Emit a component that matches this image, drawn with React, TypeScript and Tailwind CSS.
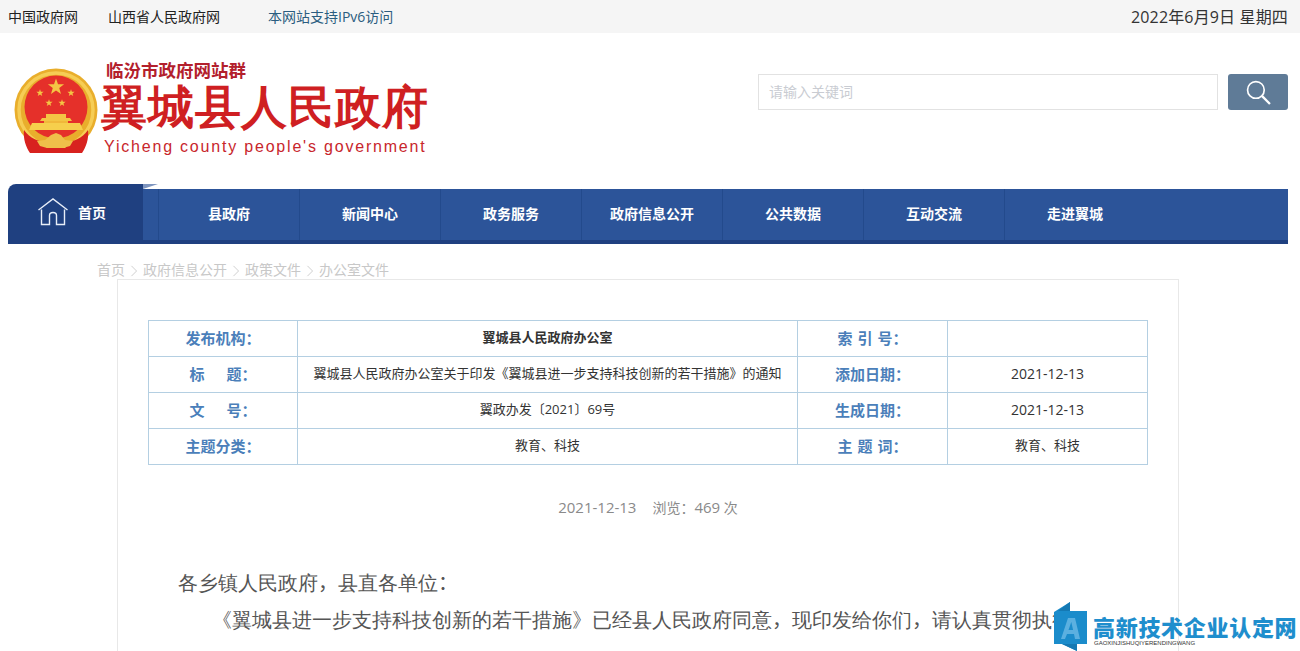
import React from "react";

const navItems = ["县政府", "新闻中心", "政务服务", "政府信息公开", "公共数据", "互动交流", "走进翼城"];

const Star = ({ x, y, r }: { x: number; y: number; r: number }) => {
  const pts = Array.from({ length: 10 }, (_, i) => {
    const a = -Math.PI / 2 + (i * Math.PI) / 5;
    const d = i % 2 === 0 ? r : r * 0.4;
    return `${(x + d * Math.cos(a)).toFixed(2)},${(y + d * Math.sin(a)).toFixed(2)}`;
  });
  return <polygon points={pts.join(" ")} fill="#f4c544" />;
};

const Emblem = () => (
  <svg viewBox="14 67 88 90" className="h-[90px] w-[88px] shrink-0">
    <circle cx="57" cy="110" r="41.5" fill="#e9ae2c" />
    <circle cx="57" cy="110" r="37" fill="none" stroke="#f6cd55" strokeWidth="3.5" />
    <circle cx="57" cy="107" r="31.5" fill="#e5302a" />
    <Star x={57} y={87} r={8.5} />
    <Star x={41} y={93} r={3.8} />
    <Star x={50} y={103} r={3.8} />
    <Star x={63} y={103} r={3.8} />
    <Star x={72} y={93} r={3.8} />
    <path d="M43 118h28l2 3H41z M47 114h20v4H47z" fill="#f4c544" />
    <path d="M45 121h24v2H45z" fill="#f0b93a" />
    <path d="M33 123h48l3 7H30z" fill="#f6cf4c" />
    <path d="M25 130c6 9 15 11 20 12l5 11H31c-4-6-7-14-6-23z" fill="#d8221f" />
    <path d="M89 130c-6 9-15 11-20 12l-5 11h19c4-6 7-14 6-23z" fill="#d8221f" />
    <path d="M52 135l5-2 5 2 4 5 8 1-3 5-7 2-2 5H50l-2-5-7-2-3-5 8-1z" fill="#efc04a" />
    <path d="M47 148h20l-2 5H49z" fill="#d8221f" />
  </svg>
);

const HomeIcon = () => (
  <svg viewBox="0 0 30 28" fill="none" stroke="#e8eef8" strokeWidth="1.4" className="h-[28px] w-[30px]">
    <path d="M0.5 12 15 1l14.5 11" />
    <path d="M3.5 11.5V26.5H11.5V17.5c0-4 7-4 7 0V26.5H26.5V11.5" />
  </svg>
);

const Label = ({ children }: { children: React.ReactNode }) => (
  <td className="border border-[#b4cfe2] pb-[1px] text-center text-[15px] font-bold text-[#4b7fba] [word-spacing:1px]">
    {children}
  </td>
);

const Value = ({ children, bold, date }: { children?: React.ReactNode; bold?: boolean; date?: boolean }) => (
  <td className={`border border-[#b4cfe2] text-center text-[#333] ${date ? "pb-[2px] text-[14px]" : "pb-[1px] text-[13px]"} ${bold ? "font-bold" : ""}`}>
    {children}
  </td>
);

const Crumb = () => (
  <svg viewBox="0 0 8 14" fill="none" stroke="#c8c8c8" className="mx-[5px] mb-[2px] h-[12px] w-[8px]">
    <path d="M1 1l6 6-6 6" />
  </svg>
);

const Punct = ({ children }: { children: React.ReactNode }) => (
  <span className="font-['Noto_Sans_CJK_SC',sans-serif]">{children}</span>
);

export default function App() {
  return (
    <div className="relative h-[651px] overflow-hidden bg-white font-['Open_Sans','Noto_Sans_CJK_SC',sans-serif]">
      <div className="flex h-[33px] items-center bg-[#f5f5f5] px-2 text-[14px] text-[#222]">
        <a>中国政府网</a>
        <a className="ml-[30px]">山西省人民政府网</a>
        <a className="ml-[48px] text-[#2b5d80]">本网站支持IPv6访问</a>
        <span className="ml-auto pr-[4px] text-[16px] tracking-[0.15px] text-[#333]">2022年6月9日 星期四</span>
      </div>

      <header className="flex h-[151px] items-start justify-between pl-[13px] pr-3">
        <div className="mt-[34px] flex">
          <Emblem />
          <div className="flex flex-col">
            <div className="ml-[5px] mt-[-9px] h-[25px] text-[17.5px] font-bold leading-[25px] text-[#b3202c]">临汾市政府网站群</div>
            <div className="mt-[-1px] h-[54px] font-serif text-[46px] font-black leading-[54px] tracking-[0.8px] text-[#cf1f22]">翼城县人民政府</div>
            <div className="ml-[3px] mt-[1px] font-['Liberation_Sans',sans-serif] text-[16px] leading-[20px] tracking-[1.8px] text-[#c8262c]">
              Yicheng county people's government
            </div>
          </div>
        </div>
        <div className="mt-[41px] flex gap-[10px]">
          <div className="flex h-[36px] w-[460px] items-center border border-[#e2e2e2] pb-[2px] pl-[10px] text-[14px] text-[#c9ccd2]">请输入关键词</div>
          <button className="flex h-[36px] w-[60px] items-center justify-center rounded-[3px] bg-[#5f7b97]">
            <svg viewBox="0 0 24 24" fill="none" stroke="#fff" strokeWidth="1.6" className="h-[25px] w-[25px]">
              <circle cx="9.5" cy="9.5" r="8" />
              <path d="M15.5 15.5 23 23" strokeWidth="2.2" />
            </svg>
          </button>
        </div>
      </header>

      <nav className="relative ml-2 flex h-[60px] w-[1280px] items-end">
        <div className="flex h-[60px] w-[135px] items-center gap-[10px] rounded-tl-[8px] bg-[#1f4080] pb-[4px] pl-[30px] text-[14px] font-bold text-white">
          <HomeIcon />
          <span>首页</span>
        </div>
        <div className="absolute left-[135px] top-0 h-0 w-0 border-b-[5px] border-l-[15px] border-b-transparent border-l-[#7e95bf]" />
        <div className="flex h-[55px] flex-1 border-b-4 border-[#1f4080] bg-[#2c5499]">
          <div className="w-[15px]" />
          {navItems.map((item) => (
            <a key={item} className="flex w-[141px] items-center justify-center border-l border-[#234a8c] pb-[2px] text-[14px] font-bold text-white">
              {item}
            </a>
          ))}
        </div>
      </nav>

      <div className="ml-[97px] flex h-[35px] items-end text-[14px] leading-[19px] text-[#c8c8c8]">
        <span>首页</span><Crumb /><span>政府信息公开</span><Crumb /><span>政策文件</span><Crumb /><span>办公室文件</span>
      </div>

      <main className="ml-[117px] h-[400px] w-[1062px] border-x border-t border-[#e8e8e8] px-[30px] pt-[40px]">
        <table className="h-[145px] w-[999px] table-fixed border-collapse">
          <colgroup>
            <col className="w-[149px]" />
            <col className="w-[500px]" />
            <col className="w-[150px]" />
            <col className="w-[200px]" />
          </colgroup>
          <tbody>
            <tr className="h-[36px]">
              <Label>发布机构{"\uFF1A"}</Label>
              <Value bold>翼城县人民政府办公室</Value>
              <Label>索 引 号{"\uFF1A"}</Label>
              <Value />
            </tr>
            <tr className="h-[36px]">
              <Label>标<span className="ml-[22px]">题{"\uFF1A"}</span></Label>
              <Value>翼城县人民政府办公室关于印发《翼城县进一步支持科技创新的若干措施》的通知</Value>
              <Label>添加日期{"\uFF1A"}</Label>
              <Value date>2021-12-13</Value>
            </tr>
            <tr className="h-[36px]">
              <Label>文<span className="ml-[22px]">号{"\uFF1A"}</span></Label>
              <Value>翼政办发〔2021〕69号</Value>
              <Label>生成日期{"\uFF1A"}</Label>
              <Value date>2021-12-13</Value>
            </tr>
            <tr className="h-[36px]">
              <Label>主题分类{"\uFF1A"}</Label>
              <Value>教育、科技</Value>
              <Label>主 题 词{"\uFF1A"}</Label>
              <Value>教育、科技</Value>
            </tr>
          </tbody>
        </table>

        <div className="mt-[31px] text-center text-[14px] leading-[22px] text-[#8a8a8a]">
          <span className="text-[15px]">2021-12-13</span>
          <span className="ml-[16px]">浏览{"\uFF1A"}<span className="text-[15px]">469</span> 次</span>
        </div>

        <div className="mt-[45px] pl-[30px] font-serif text-[20px] leading-[35px] text-[#555]">
          <p>各乡镇人民政府<Punct>{"\uFF0C"}</Punct>县直各单位<Punct>{"\uFF1A"}</Punct></p>
          <p className="indent-[34px]">《翼城县进一步支持科技创新的若干措施》已经县人民政府同意<Punct>{"\uFF0C"}</Punct>现印发给你们<Punct>{"\uFF0C"}</Punct>请认真贯彻执行。</p>
        </div>
      </main>

      <div className="absolute bottom-0 left-[1054px] flex h-[49px] items-start">
        <svg viewBox="0 0 34 49" className="h-[49px] w-[34px]">
          <path d="M0 10 16 0v9h17v33H23v7L8 42H0z" fill="#1b8ccb" />
          <path d="M16 0v9H4z" fill="#1579b3" />
          <path d="M8 42h15v7z" fill="#1579b3" />
          <path d="M7 37 14 16h7l5 21h-5l-1-5h-7l-2 5z M14.5 28h4.6l-1.8-8z" fill="#5bb0e0" fillRule="evenodd" />
        </svg>
        <div className="ml-[5px] mt-[13px] flex flex-col">
          <span className="text-[22px] font-black leading-[24px] tracking-[0.7px] text-[#1f8ecd]">高新技术企业认定网</span>
          <span className="ml-[1px] font-['Liberation_Sans',sans-serif] text-[6px] leading-[8px] text-[#333]">GAOXINJISHUQIYERENDINGWANG</span>
        </div>
      </div>
    </div>
  );
}
